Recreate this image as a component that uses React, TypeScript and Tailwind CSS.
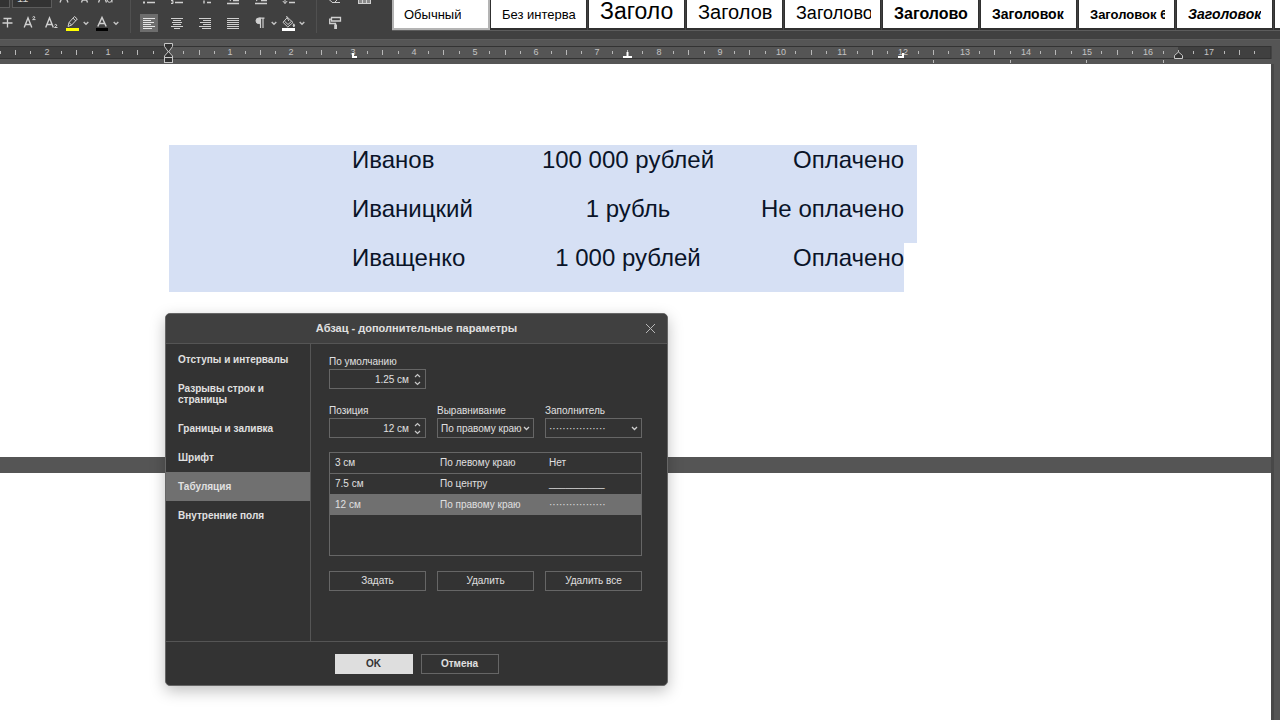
import React, { useState } from 'react';

const STYLE_PRESETS = [
  { name: 'Обычный', caption: 'Обычный', font: 'text-[13px]' },
  { name: 'Без интервала', caption: 'Без интерва', font: 'text-[13px]' },
  { name: 'Заголовок 1', caption: 'Заголо', font: 'text-[23px]' },
  { name: 'Заголовок 2', caption: 'Заголов', font: 'text-[20px]' },
  { name: 'Заголовок 3', caption: 'Заголово', font: 'text-[18px]' },
  { name: 'Заголовок 4', caption: 'Заголово', font: 'text-[16px] font-bold' },
  { name: 'Заголовок 5', caption: 'Заголовок', font: 'text-[14px] font-bold' },
  { name: 'Заголовок 6', caption: 'Заголовок 6', font: 'text-[13px] font-bold' },
  { name: 'Заголовок 7', caption: 'Заголовок', font: 'text-[14px] font-bold italic' },
  { name: 'Другие стили', caption: '', font: 'text-[13px]' },
];

const PAYMENTS = [
  { name: 'Иванов', sum: '100 000 рублей', status: 'Оплачено' },
  { name: 'Иваницкий', sum: '1 рубль', status: 'Не оплачено' },
  { name: 'Иващенко', sum: '1 000 рублей', status: 'Оплачено' },
];

const SECTIONS = [
  'Отступы и интервалы',
  'Разрывы строк и страницы',
  'Границы и заливка',
  'Шрифт',
  'Табуляция',
  'Внутренние поля',
];

const DOTS = '·················';

const TAB_STOPS = [
  { position: '3 см', align: 'По левому краю', leader: 'Нет' },
  { position: '7.5 см', align: 'По центру', leader: '__________' },
  { position: '12 см', align: 'По правому краю', leader: DOTS },
];

/* ---------- Toolbar ---------- */

const Icon: React.FC<{ children: React.ReactNode }> = ({ children }) => (
  <svg
    viewBox="0 0 20 20"
    className="h-5 w-5 shrink-0"
    fill="none"
    stroke="#d0d0d0"
    strokeWidth="1"
    aria-hidden="true"
  >
    {children}
  </svg>
);

const Caret: React.FC = () => (
  <svg viewBox="0 0 8 20" className="h-5 w-2 shrink-0" fill="none" stroke="#c4c4c4" strokeWidth="1.4" aria-hidden="true">
    <path d="M1.7 9 L4 11.3 L6.3 9" />
  </svg>
);

interface ToolProps {
  label: string;
  className?: string;
  menu?: boolean;
  children: React.ReactNode;
}

const Tool: React.FC<ToolProps> = ({ label, className = '', menu, children }) => (
  <button type="button" aria-label={label} className={`flex h-5 shrink-0 items-center justify-center ${className}`}>
    <Icon>{children}</Icon>
    {menu && <Caret />}
  </button>
);

const Toolbar: React.FC = () => (
  <header className="flex h-10 items-end overflow-hidden border-b border-[#5c5c5c] bg-[#404040]">
    <div className="flex h-[39px] shrink-0 items-end pb-[6px]">
      {/* Font */}
      <div className="-ml-1 flex w-[135px] flex-col gap-[5px] border-r border-[#505050]">
        <div className="flex items-center">
          <div className="h-5 w-[14px] border border-[#5c5c5c] bg-[#333]" />
          <input
            aria-label="Размер шрифта"
            defaultValue="11"
            className="mr-[3px] ml-[2px] h-5 w-10 border border-[#5c5c5c] bg-[#333] px-1 text-[11px] text-[#d0d0d0]"
          />
          <Tool label="Увеличить размер" className="w-[20px]">
            <path d="M5 14.5 L9 4.5 L13 14.5 M6.5 11 H11.5" strokeWidth="1.3" />
          </Tool>
          <Tool label="Уменьшить размер" className="w-[20px]">
            <path d="M6.5 14.5 L9.5 6.5 L12.5 14.5 M7.5 12 H11.5" strokeWidth="1.3" />
          </Tool>
          <Tool label="Изменить регистр" className="w-[22px]">
            <path d="M2.5 14.5 L6.5 4.5 L10.5 14.5 M4 11 H9" strokeWidth="1.3" />
            <circle cx="13.5" cy="12" r="2.3" />
            <path d="M16 9 V14.5" />
          </Tool>
        </div>
        <div className="flex items-center">
          <Tool label="Зачеркнутый" className="w-[22px]">
            <path d="M6.5 5.5 H14.5 M5.5 10 H15.5 M10.5 5.5 V14.5" strokeWidth="1.3" />
          </Tool>
          <Tool label="Надстрочный" className="w-[22px]">
            <path d="M5.2 14.5 L9 5 L12.8 14.5 M6.5 11.5 H11.5" strokeWidth="1.4" />
            <path d="M13.5 4.3 Q14.8 2.8 15.8 4 Q16.2 5 13.6 6.6 H16.5" />
          </Tool>
          <Tool label="Подстрочный" className="w-[22px]">
            <path d="M4.7 14.5 L8.5 5 L12.3 14.5 M6 11.5 H11" strokeWidth="1.4" />
            <path d="M13.5 12 Q14.8 10.8 15.8 12 Q16.1 13 13.5 14.5 H16.5" />
          </Tool>
          <Tool label="Цвет выделения" menu>
            <path d="M6 13.5 L7 9.5 L12.5 3.5 L15.3 6 L9.7 12 Z M11 5.2 L13.8 7.8 M7 9.5 L9.7 12" />
            <rect x="4" y="15" width="13" height="3" fill="#ffff00" stroke="none" />
          </Tool>
          <Tool label="Цвет шрифта" className="ml-[2px]" menu>
            <path d="M5.8 13.5 L10 4.5 L14.2 13.5 M7.2 10.5 H12.8" strokeWidth="1.5" />
            <rect x="4" y="15" width="12" height="3" fill="#000" stroke="none" />
          </Tool>
        </div>
      </div>

      {/* Paragraph */}
      <div className="flex w-[186px] flex-col gap-[5px] border-r border-[#505050] pl-1">
        <div className="flex items-center">
          <Tool label="Маркированный список" className="w-7">
            <path d="M8 6.5 H16 M8 10.5 H16 M8 14.5 H16" strokeWidth="1.3" />
            <path d="M4 6.5 H6 M4 10.5 H6 M4 14.5 H6" strokeWidth="2" />
          </Tool>
          <Tool label="Нумерованный список" className="w-7">
            <path d="M8 6.5 H16 M8 10.5 H16 M8 14.5 H16" strokeWidth="1.3" />
            <path d="M4 12.5 H6 V15.5 H4 M4.5 14 H6" />
          </Tool>
          <Tool label="Многоуровневый список" className="w-7">
            <path d="M6 6.5 H15 M11 10.5 H16 M12 14.5 H16" strokeWidth="1.3" />
            <path d="M9 12.5 V15.5" strokeWidth="1.4" />
          </Tool>
          <Tool label="Уменьшить отступ" className="w-7">
            <path d="M4 15.5 H16 M10 12.5 H16 M4 5.5 H16" strokeWidth="1.3" />
            <path d="M8 8 L5 10.5 L8 13" />
          </Tool>
          <Tool label="Увеличить отступ" className="w-7">
            <path d="M4 15.5 H16 M10 12.5 H16 M4 5.5 H16" strokeWidth="1.3" />
            <path d="M5 8 L8 10.5 L5 13" />
          </Tool>
          <Tool label="Междустрочный интервал" className="w-7">
            <path d="M10 6.5 H16 M10 10.5 H16 M10 14.5 H16" strokeWidth="1.3" />
            <path d="M6 5 V15.5 M3.8 13 L6 15.5 L8.2 13" />
          </Tool>
        </div>
        <div className="flex items-center">
          <button
            type="button"
            aria-label="По левому краю"
            aria-pressed="true"
            className="flex w-7 justify-center"
          >
            <span className="flex h-[18px] w-[18px] items-center justify-center bg-[#6d6d6d]">
              <svg viewBox="0 0 12 12" className="h-3 w-3" stroke="#e6e6e6" strokeWidth="1" aria-hidden="true">
                <path d="M0 1.5 H12 M0 3.5 H8 M0 5.5 H11 M0 7.5 H8 M0 9.5 H12 M0 11.5 H9" />
              </svg>
            </span>
          </button>
          <Tool label="По центру" className="w-7">
            <path d="M4 5.5 H16 M6 7.5 H14 M5 9.5 H15 M6 11.5 H14 M4 13.5 H16 M7 15.5 H13" />
          </Tool>
          <Tool label="По правому краю" className="w-7">
            <path d="M4 5.5 H16 M8 7.5 H16 M5 9.5 H16 M8 11.5 H16 M4 13.5 H16 M7 15.5 H16" />
          </Tool>
          <Tool label="По ширине" className="w-7">
            <path d="M4 5.5 H16 M4 7.5 H16 M4 9.5 H16 M4 11.5 H16 M4 13.5 H16 M4 15.5 H16" />
          </Tool>
          <Tool label="Непечатаемые символы" className="ml-[3px]" menu>
            <path d="M10.5 5 V15 M13 5 V15 M9.5 5.2 H14.5" strokeWidth="1.2" />
            <path d="M10.5 5 H8.8 A2.8 2.8 0 0 0 8.8 10.6 H10.5 Z" fill="#d0d0d0" />
          </Tool>
          <Tool label="Цвет фона" menu>
            <path d="M9.5 4.3 L15 9.5 L9.8 14 L5 9.3 Z M6.5 8.2 L10 11.5 L13.5 8.3 M8.5 3 L10.8 8" />
            <path d="M15.8 10.8 Q17.5 13.5 15.8 13.8 Q14.3 13.5 15.8 10.8" fill="#d0d0d0" />
            <rect x="4" y="15" width="13" height="3" fill="#fff" stroke="none" />
          </Tool>
        </div>
      </div>

      <div className="flex w-[75px] flex-col gap-[5px] pl-2">
        <div className="flex items-center">
          <Tool label="Очистить стиль" className="mr-2">
            <path d="M5 9 L10 4 L15 9 L9.5 14.5 H7.5 L4 11.5 Z M7 14.5 H15 M8 7 L13 12" />
          </Tool>
          <Tool label="Выделить" className="w-[22px]">
            <rect x="4.5" y="5" width="12" height="10.5" fill="#8a8a8a" />
            <path d="M4.5 11.5 H16.5 M8.5 5 V15.5 M12.5 5 V15.5" />
          </Tool>
        </div>
        <div className="flex items-center">
          <Tool label="Копировать стиль">
            <path d="M6.5 4.5 H15.5 V8 H6.5 Z M6.5 6.2 H4.7 V10.5 H10.5 V12" strokeWidth="1.3" />
            <rect x="9.2" y="11.5" width="2.8" height="4.5" fill="#d0d0d0" stroke="none" />
          </Tool>
        </div>
      </div>
    </div>

    {/* Style gallery */}
    <div className="mb-2 flex h-10 min-w-0 flex-1 items-start overflow-hidden border-b border-[#5c5c5c]">
      {STYLE_PRESETS.map((preset, index) => (
        <button
          key={preset.name}
          type="button"
          aria-label={preset.name}
          className={`flex h-full shrink-0 items-baseline overflow-hidden border-b-2 bg-white pr-[9px] text-left text-black ${
            index === 0
              ? 'w-[98px] border-x-2 border-[#b4b4b4] pl-[10px]'
              : 'mr-px w-[97px] border-x border-[#303030] pl-[11px]'
          }`}
        >
          <span className="h-7 w-0 shrink-0" />
          <span className={`min-w-0 overflow-hidden leading-none whitespace-nowrap ${preset.font}`}>
            {preset.caption}
          </span>
        </button>
      ))}
    </div>
  </header>
);

/* ---------- Ruler ---------- */

const ZERO_X = 169;
const CM = 61.2;
const MARGIN_END_X = 1178;

const Ruler: React.FC = () => {
  const quarters = Array.from({ length: 83 }, (_, i) => i - 11);

  return (
    <svg className="block h-6 w-full bg-[#555]" aria-label="Линейка">
      <rect x="-1" y="6.5" width="1272" height="12" fill="#404040" stroke="#333" />
      <rect x={ZERO_X} y="7" width={MARGIN_END_X - ZERO_X} height="11" fill="#555" />

      {quarters.map((q) => {
        if (q === 0) return null;
        const x = Math.round(ZERO_X + (q * CM) / 4);
        if (q % 4 === 0) {
          return (
            <text key={q} x={x} y="15" textAnchor="middle" fontSize="9" fill="#c4c4c4">
              {Math.abs(q / 4)}
            </text>
          );
        }
        const half = q % 2 === 0;
        return <rect key={q} x={x - 1} y={half ? 10 : 11} width="1" height={half ? 5 : 3} fill="#b8b8b8" />;
      })}

      {/* default tab marks past the last custom stop */}
      {[933, 1010, 1086, 1163].map((x) => (
        <rect key={x} x={x} y="20" width="1" height="3" fill="#b8b8b8" />
      ))}

      {/* left indent */}
      <g fill="#333" stroke="#c8c8c8">
        <path d="M164.5 3.5 H172.5 V6.5 L168.5 12 L164.5 6.5 Z" />
        <path d="M164.5 17.5 V16 L168.5 11.5 L172.5 16 V17.5 Z" />
        <rect x="164.5" y="17.5" width="8" height="5" />
      </g>
      {/* right indent */}
      <path d="M1174.5 18.5 V15.5 L1178.5 12 L1182.5 15.5 V18.5 Z" fill="#333" stroke="#c8c8c8" />

      {/* left, center and right tab stops */}
      <g fill="none" stroke="#fff" strokeWidth="2">
        <path d="M353 13 V17 H357" />
        <path d="M623 17 H632 M627.5 12 V17" />
        <path d="M903 13 V17 H898" />
      </g>
    </svg>
  );
};

/* ---------- Document ---------- */

const DocumentArea: React.FC = () => (
  <main className="flex flex-1 bg-[#555]">
    <div className="flex min-w-0 flex-1 flex-col gap-4">
      <section className="h-[393px] overflow-hidden bg-white pt-[81px] pl-[169px]">
        {PAYMENTS.map((row, index) => (
          <p
            key={row.name}
            className={`grid h-[49px] grid-cols-3 bg-[#d6e0f4] pl-[183px] text-[24px] leading-[29px] whitespace-nowrap text-[#0a1428] ${
              index === PAYMENTS.length - 1 ? 'w-[735px]' : 'w-[748px] pr-[13px]'
            }`}
          >
            <span>{row.name}</span>
            <span className="text-center">{row.sum}</span>
            <span className="text-right">{row.status}</span>
          </p>
        ))}
      </section>
      <section className="flex-1 bg-white" />
    </div>
    <div className="w-[9px] border-l-[3px] border-[#484848]" />
  </main>
);

/* ---------- Paragraph settings dialog ---------- */

interface SpinnerProps {
  id: string;
  label: string;
  value: string;
}

const Spinner: React.FC<SpinnerProps> = ({ id, label, value }) => {
  const [current, setCurrent] = useState(value);

  return (
    <div className="flex w-[97px] flex-col">
      <label htmlFor={id} className="leading-[15px]">
        {label}
      </label>
      <div className="flex h-5 items-center border border-[#666]">
        <input
          id={id}
          value={current}
          onChange={(e) => setCurrent(e.target.value)}
          className="h-full min-w-0 flex-1 bg-transparent pr-1 text-right outline-none"
        />
        <div className="flex w-3 flex-col items-center gap-[3px] pr-1">
          <button type="button" aria-label={`${label}: больше`}>
            <svg viewBox="0 0 7 5" className="block h-[5px] w-[7px]" fill="none" stroke="#c8c8c8" strokeWidth="1.2">
              <path d="M1 4 L3.5 1.5 L6 4" />
            </svg>
          </button>
          <button type="button" aria-label={`${label}: меньше`}>
            <svg viewBox="0 0 7 5" className="block h-[5px] w-[7px]" fill="none" stroke="#c8c8c8" strokeWidth="1.2">
              <path d="M1 1 L3.5 3.5 L6 1" />
            </svg>
          </button>
        </div>
      </div>
    </div>
  );
};

interface PickerProps {
  id: string;
  label: string;
  value: string;
  options: string[];
}

const Picker: React.FC<PickerProps> = ({ id, label, value, options }) => (
  <div className="flex w-[97px] flex-col">
    <label htmlFor={id} className="leading-[15px]">
      {label}
    </label>
    <div className="relative">
      <select
        id={id}
        defaultValue={value}
        className="block h-5 w-full appearance-none border border-[#666] bg-[#333] pl-[3px] outline-none"
      >
        {options.map((option) => (
          <option key={option}>{option}</option>
        ))}
      </select>
      <svg
        viewBox="0 0 7 5"
        className="pointer-events-none absolute top-2 right-1 h-[5px] w-[7px]"
        fill="none"
        stroke="#d0d0d0"
        strokeWidth="1.3"
        aria-hidden="true"
      >
        <path d="M1 1 L3.5 3.5 L6 1" />
      </svg>
    </div>
  </div>
);

const ParagraphDialog: React.FC = () => {
  const [section, setSection] = useState('Табуляция');
  const [selectedStop, setSelectedStop] = useState(2);

  return (
    <div
      role="dialog"
      aria-labelledby="dialog-title"
      className="absolute top-[313px] left-[165px] w-[503px] overflow-hidden rounded-[5px] border border-[#666] bg-[#333] text-[10px] text-[#e0e0e0] shadow-[0_5px_15px_rgba(0,0,0,0.25)]"
    >
      <div className="flex h-[30px] items-center border-b border-[#555] bg-[#404040] pr-[11px] pl-[22px]">
        <h2 id="dialog-title" className="flex-1 text-center text-[11px] font-bold">
          Абзац - дополнительные параметры
        </h2>
        <button type="button" aria-label="Закрыть">
          <svg viewBox="0 0 11 11" className="block h-[11px] w-[11px]" stroke="#b8b8b8" fill="none">
            <path d="M1 1 L10 10 M10 1 L1 10" />
          </svg>
        </button>
      </div>

      <div className="flex h-[297px]">
        <nav className="w-[145px] border-r border-[#555] pt-px">
          {SECTIONS.map((name) => (
            <button
              key={name}
              type="button"
              onClick={() => setSection(name)}
              className={`block w-full px-3 py-[9px] text-left leading-[11px] font-bold ${
                section === name ? 'bg-[#707070]' : ''
              }`}
            >
              {name}
            </button>
          ))}
        </nav>

        <div className="w-[331px] pt-[10px] pl-[18px]">
          <Spinner id="default-tab" label="По умолчанию" value="1.25 см" />

          <div className="mt-[14px] flex justify-between">
            <Spinner id="tab-position" label="Позиция" value="12 см" />
            <Picker
              id="tab-align"
              label="Выравнивание"
              value="По правому краю"
              options={['По левому краю', 'По центру', 'По правому краю']}
            />
            <Picker id="tab-leader" label="Заполнитель" value={DOTS} options={['Нет', DOTS, '__________']} />
          </div>

          <div className="mt-[14px] h-[104px] border border-[#666]">
            <table className="w-full table-fixed border-collapse">
              <tbody>
                {TAB_STOPS.map((stop, index) => (
                  <tr
                    key={stop.position}
                    onClick={() => setSelectedStop(index)}
                    className={`${index === 0 ? 'h-5 border-b border-[#666]' : 'h-[21px]'} ${
                      selectedStop === index ? 'bg-[#707070]' : ''
                    }`}
                  >
                    <td className="w-[105px] p-0 pl-[5px]">{stop.position}</td>
                    <td className="w-[109px] p-0 pl-[5px]">{stop.align}</td>
                    <td className="p-0 pl-[5px]">{stop.leader}</td>
                  </tr>
                ))}
              </tbody>
            </table>
          </div>

          <div className="mt-[15px] flex justify-between">
            {['Задать', 'Удалить', 'Удалить все'].map((name) => (
              <button key={name} type="button" className="h-5 w-[97px] border border-[#666] pb-px">
                {name}
              </button>
            ))}
          </div>
        </div>
      </div>

      <div className="flex h-11 items-center justify-center gap-2 border-t border-[#555]">
        <button type="button" className="h-5 w-[78px] bg-[#dedede] pb-px font-bold text-[#333]">
          OK
        </button>
        <button type="button" className="h-5 w-[78px] border border-[#666] pb-px font-bold">
          Отмена
        </button>
      </div>
    </div>
  );
};

const App: React.FC = () => (
  <div className="relative flex min-h-screen flex-col overflow-hidden font-['Liberation_Sans',Arial,sans-serif]">
    <Toolbar />
    <Ruler />
    <DocumentArea />
    <ParagraphDialog />
  </div>
);

export default App;
